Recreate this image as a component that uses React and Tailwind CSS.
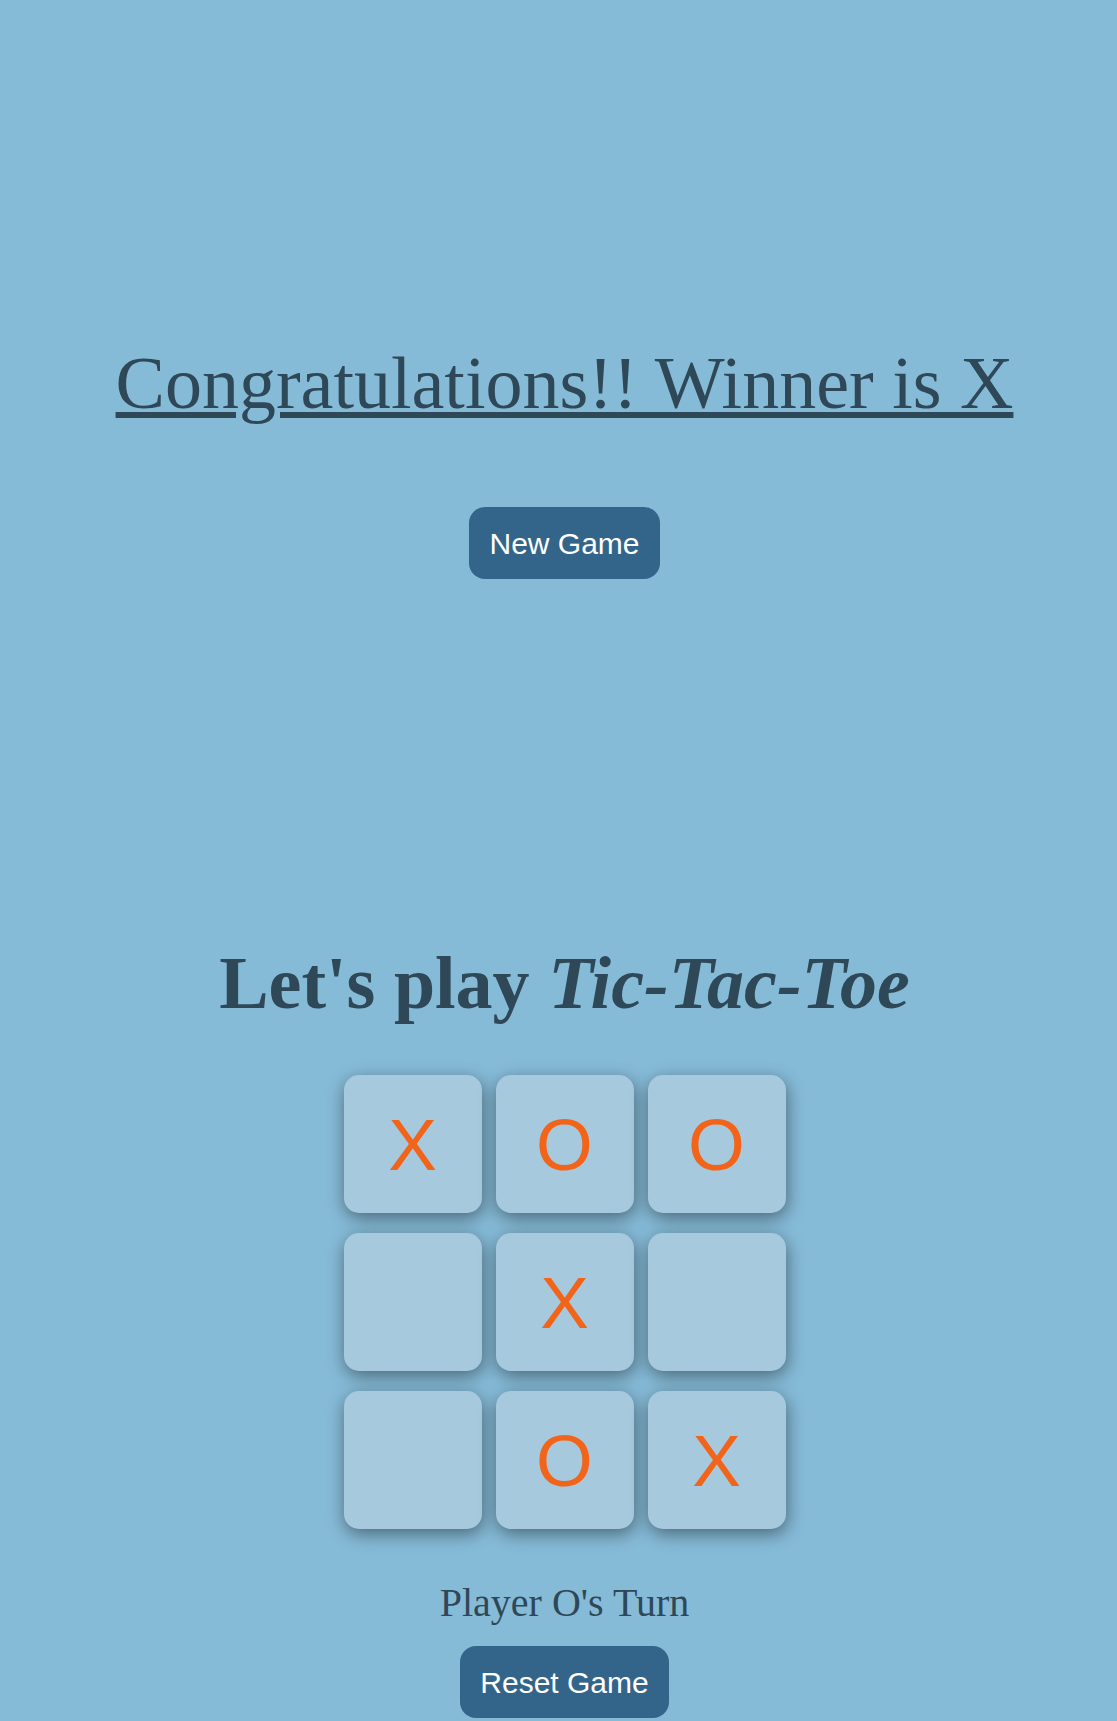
import React, { useState } from 'react'

const serif = { fontFamily: '"Liberation Serif", "Times New Roman", serif' }

const Cell = ({ value, onClick }) => (
  <button
    onClick={onClick}
    className="w-[138px] h-[138px] rounded-[15px] bg-[#a6c9dd] shadow-[1px_5px_18px_rgba(0,0,0,0.45)] flex items-center justify-center text-[73px] leading-none text-[#f26419] font-['Liberation_Sans',Arial,sans-serif]"
  >
    {value}
  </button>
)

const App = () => {
  const [board] = useState(['X', 'O', 'O', '', 'X', '', '', 'O', 'X'])

  const rows = [board.slice(0, 3), board.slice(3, 6), board.slice(6, 9)]

  return (
    <div className="min-h-[1721px] bg-[#86bbd8] text-[#2f4858] pl-3" style={serif}>
      <div className="flex flex-col items-center pt-[342px]">
        <h1 className="text-[74px] leading-[83px] underline decoration-[6px] underline-offset-[4px]">
          Congratulations!! Winner is X
        </h1>
        <button className="mt-[82px] h-[72px] px-5 rounded-[16px] bg-[#33658a] text-white text-[30px] font-['Liberation_Sans',Arial,sans-serif]">
          New Game
        </button>
      </div>

      <div className="flex flex-col items-center mt-[363px]">
        <h2 className="text-[74px] leading-[83px] font-bold">
          Let's play <em>Tic-Tac-Toe</em>
        </h2>
        <div className="mt-[50px] flex flex-col gap-[20px]">
          {rows.map((row, r) => (
            <div key={r} className="flex gap-[14px]">
              {row.map((v, c) => (
                <Cell key={c} value={v} />
              ))}
            </div>
          ))}
        </div>
        <p className="mt-[51px] text-[40px] leading-[46px]">Player O's Turn</p>
        <button className="mt-[20px] h-[72px] px-5 rounded-[16px] bg-[#33658a] text-white text-[30px] font-['Liberation_Sans',Arial,sans-serif]">
          Reset Game
        </button>
      </div>
    </div>
  )
}

export default App
